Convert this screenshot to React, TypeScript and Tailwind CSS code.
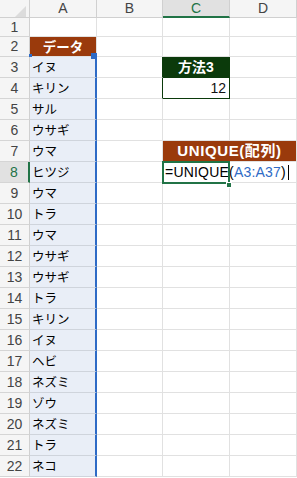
const rows: { n: number; a?: string }[] = [
  { n: 1 },
  { n: 2, a: 'データ' },
  { n: 3, a: 'イヌ' },
  { n: 4, a: 'キリン' },
  { n: 5, a: 'サル' },
  { n: 6, a: 'ウサギ' },
  { n: 7, a: 'ウマ' },
  { n: 8, a: 'ヒツジ' },
  { n: 9, a: 'ウマ' },
  { n: 10, a: 'トラ' },
  { n: 11, a: 'ウマ' },
  { n: 12, a: 'ウサギ' },
  { n: 13, a: 'ウサギ' },
  { n: 14, a: 'トラ' },
  { n: 15, a: 'キリン' },
  { n: 16, a: 'イヌ' },
  { n: 17, a: 'ヘビ' },
  { n: 18, a: 'ネズミ' },
  { n: 19, a: 'ゾウ' },
  { n: 20, a: 'ネズミ' },
  { n: 21, a: 'トラ' },
  { n: 22, a: 'ネコ' },
];

const latin = "font-['Liberation_Sans','Noto_Sans_CJK_JP',sans-serif]";
const jp = "font-['Noto_Sans_CJK_JP',sans-serif]";

function rowHeight(n: number) {
  if (n === 1) return 'h-[19px]';
  if (n === 2) return 'h-[20px]';
  return 'h-[21px]';
}

function RowHeader({ n }: { n: number }) {
  const active = n === 8;
  return (
    <div
      className={`w-[30px] shrink-0 flex items-center justify-center border-b border-[#d5d5d5] text-[14px] ${latin} ${
        active
          ? 'bg-[#e1e1e1] text-[#217346] border-r-2 border-r-[#217346]'
          : 'bg-[#f5f5f5] text-[#444] border-r border-r-[#d0d0d0]'
      }`}
    >
      {n}
    </div>
  );
}

function CellA({ n, a }: { n: number; a?: string }) {
  if (n === 2) {
    return (
      <div className={`w-[67px] shrink-0 bg-[#9a3a0c] border-r border-b border-[#e1e1e1] flex items-center justify-center text-white font-bold text-[13.5px] ${jp}`}>
        {a}
      </div>
    );
  }
  if (n >= 3) {
    return (
      <div className={`relative w-[67px] shrink-0 bg-[#e9eef7] border-b border-b-[#cfd4dc] border-r-2 border-r-[#2e6bc6] flex items-center pl-[2px] pt-[1px] text-[12.5px] text-black ${jp}`}>
        {a}
        {n === 3 && (
          <>
            <span className="absolute left-[-1px] top-[-3px] w-[3px] h-[3px] bg-[#2e6bc6]" />
            <span className="absolute left-[61px] top-[-4px] w-[6px] h-[6px] bg-[#2e6bc6]" />
          </>
        )}
      </div>
    );
  }
  return <div className="w-[67px] shrink-0 border-r border-b border-[#e1e1e1]" />;
}

function Blank({ w, extra = '' }: { w: string; extra?: string }) {
  return <div className={`${w} shrink-0 border-r border-b border-[#e1e1e1] ${extra}`} />;
}

function RestCells({ n }: { n: number }) {
  if (n === 3) {
    return (
      <>
        <Blank w="w-[66px]" extra="border-r-[#0b3a0b]" />
        <div className={`w-[67px] shrink-0 bg-[#0b3a0b] border-r border-r-[#0b3a0b] border-b border-b-[#0b3a0b] flex items-center justify-center text-white font-bold text-[14px] ${latin}`}>
          方法3
        </div>
        <Blank w="w-[67px]" />
      </>
    );
  }
  if (n === 4) {
    return (
      <>
        <Blank w="w-[66px]" extra="border-r-[#0b3a0b]" />
        <div className={`w-[67px] shrink-0 border-r border-b border-[#0b3a0b] flex items-center justify-end pr-[3px] pt-[1px] text-[14px] text-[#111] ${latin}`}>
          12
        </div>
        <Blank w="w-[67px]" />
      </>
    );
  }
  if (n === 7) {
    return (
      <>
        <Blank w="w-[66px]" />
        <div className={`w-[134px] shrink-0 bg-[#9a3a0c] border-r border-b border-[#e1e1e1] flex items-center justify-center text-white font-bold text-[15px] tracking-[0.6px] ${latin}`}>
          UNIQUE(配列)
        </div>
      </>
    );
  }
  if (n === 8) {
    return (
      <>
        <Blank w="w-[66px]" />
        <div className="relative z-10 w-[67px] shrink-0 border-b border-[#e1e1e1] flex items-center pl-[2px] pt-[1px] overflow-visible">
          <span className={`whitespace-nowrap text-[14px] text-black tracking-[0.2px] ${latin} flex items-center`}>
            =UNIQUE(<span className="text-[#2e6bc6]">A3:A37</span>)
            <span className="ml-[2px] inline-block w-px h-[15px] bg-black" />
          </span>
          <span className="absolute left-[-1px] top-[-1px] w-[68px] h-[23px] border-2 border-[#217346]" />
          <span className="absolute left-[63px] top-[20px] w-[6px] h-[6px] bg-[#217346] border border-white" />
        </div>
        <Blank w="w-[67px]" />
      </>
    );
  }
  return (
    <>
      <Blank w="w-[66px]" />
      <Blank w="w-[67px]" />
      <Blank w="w-[67px]" />
    </>
  );
}

export default function App() {
  return (
    <div className="w-[297px] h-[478px] bg-white overflow-hidden">
      {/* column headers */}
      <div className={`flex h-[18px] text-[14px] ${latin}`}>
        <div className="relative w-[30px] shrink-0 bg-[#f5f5f5] border-r border-b border-[#d0d0d0]">
          <svg className="absolute left-[15px] top-[6px]" width="11" height="11" viewBox="0 0 11 11">
            <polygon points="11,0 11,11 0,11" fill="#dcdcdc" />
          </svg>
        </div>
        <div className="w-[67px] shrink-0 bg-[#f5f5f5] border-r border-b border-[#d0d0d0] flex items-center justify-center text-[#444]">A</div>
        <div className="w-[66px] shrink-0 bg-[#f5f5f5] border-r border-b border-[#d0d0d0] flex items-center justify-center text-[#444]">B</div>
        <div className="w-[67px] shrink-0 bg-[#e1e1e1] border-r border-r-[#d0d0d0] border-b-2 border-b-[#217346] flex items-center justify-center text-[#217346]">C</div>
        <div className="w-[67px] shrink-0 bg-[#f5f5f5] border-r border-b border-[#d0d0d0] flex items-center justify-center text-[#444]">D</div>
      </div>

      {rows.map((r) => (
        <div key={r.n} className={`flex ${rowHeight(r.n)}`}>
          <RowHeader n={r.n} />
          <CellA n={r.n} a={r.a} />
          <RestCells n={r.n} />
        </div>
      ))}
    </div>
  );
}
